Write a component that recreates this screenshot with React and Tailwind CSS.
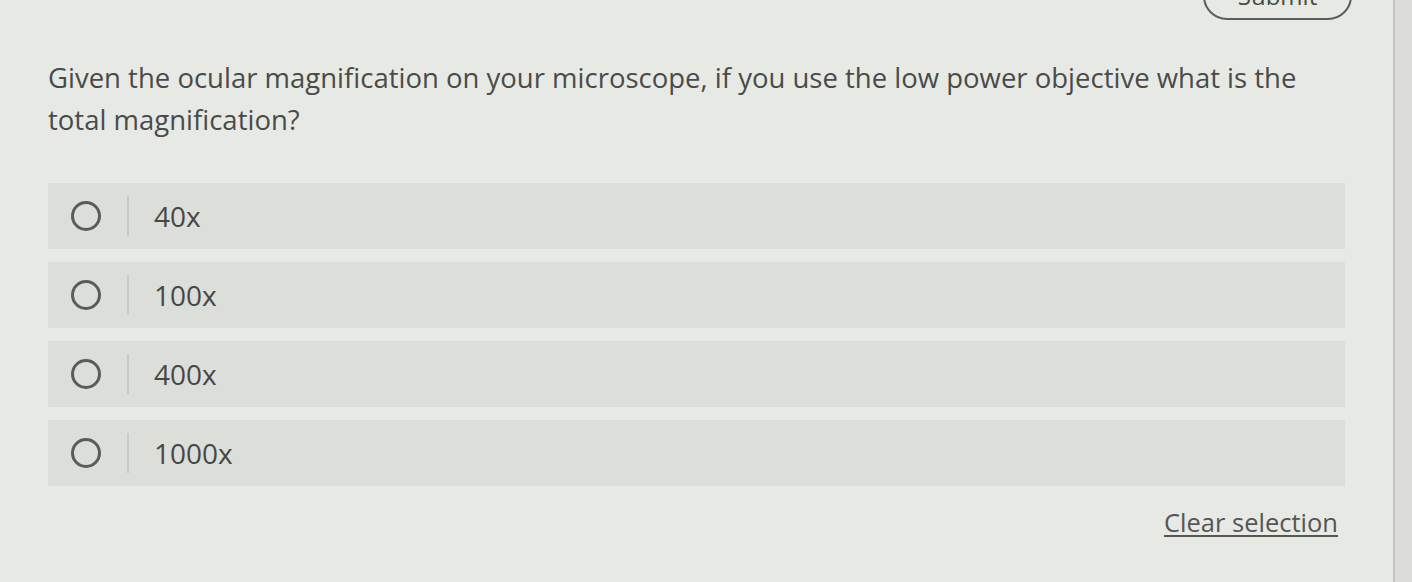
const options = ["40x", "100x", "400x", "1000x"];

function OptionRow({ label }) {
  return (
    <label className="flex h-[66px] items-center bg-[#dcdeda] pl-[23px] cursor-pointer">
      <span className="h-[30px] w-[30px] rounded-full border-[3px] border-[#5b5c5a]" />
      <span className="ml-[26px] h-[40px] w-[2px] bg-[#c9cac6]" />
      <span className="ml-[25px] text-[28px] text-[#474846]">{label}</span>
    </label>
  );
}

export default function App() {
  return (
    <div
      className="flex h-[582px] w-[1412px] overflow-hidden bg-[#dcddd9]"
      style={{ fontFamily: '"Open Sans", "Liberation Sans", sans-serif' }}
    >
      <div className="flex h-full w-[1395px] flex-col border-r-2 border-[#c6c7c3] bg-[#e7e9e5] px-[48px]">
        {/* submit button, scrolled mostly out of view */}
        <div className="flex h-[20px] justify-end">
          <button className="-mr-[7px] -mt-[28px] h-[48px] w-[149px] rounded-full border-2 border-[#5d5e5c] text-[24px] text-[#4a4b49]">
            Submit
          </button>
        </div>

        <p className="mt-[37px] max-w-[1290px] text-[27.5px] leading-[42px] text-[#4a4b49]">
          Given the ocular magnification on your microscope, if you use the low power objective what is the total
          magnification?
        </p>

        <div className="mt-[42px] flex flex-col gap-[13px]">
          {options.map((o) => (
            <OptionRow key={o} label={o} />
          ))}
        </div>

        <div className="mt-[22px] flex justify-end pr-[7px]">
          <button className="text-[25.5px] leading-[28px] text-[#555654] underline underline-offset-[3px]">
            Clear selection
          </button>
        </div>
      </div>
    </div>
  );
}
